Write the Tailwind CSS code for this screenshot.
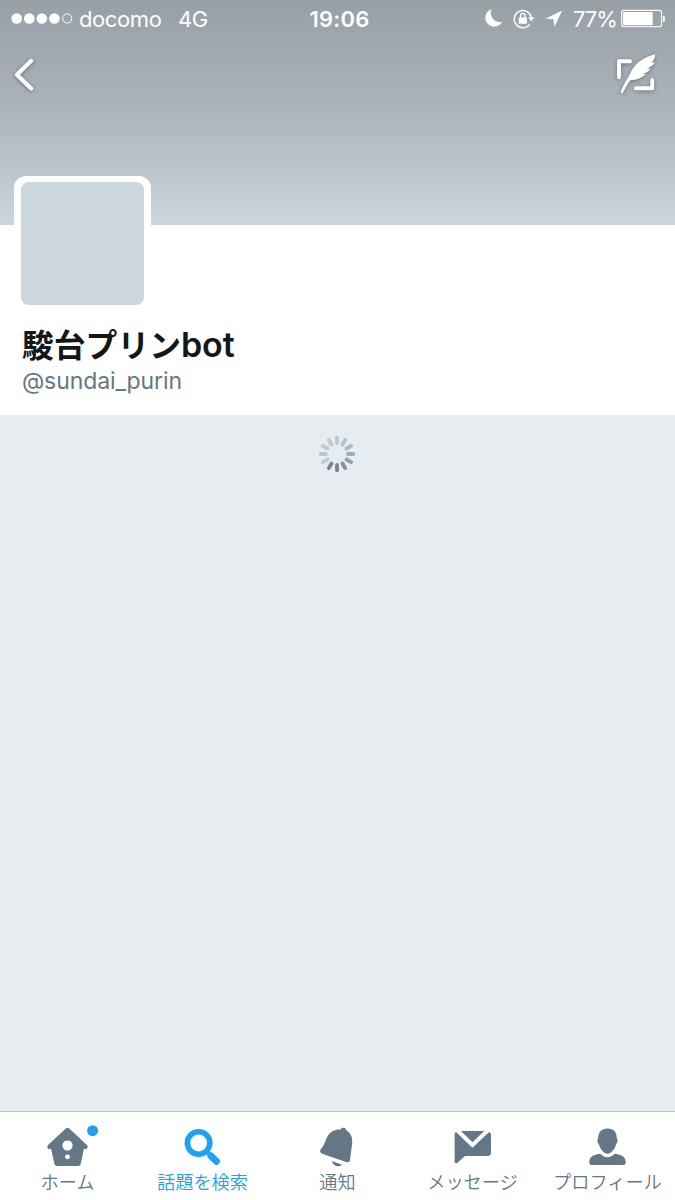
<!DOCTYPE html>
<html lang="ja">
<head>
<meta charset="utf-8">
<title>駿台プリンbot</title>
<script src="https://cdn.jsdelivr.net/npm/@tailwindcss/browser@4"></script>
</head>
<body class="w-[675px] h-[1200px] overflow-hidden flex flex-col bg-[#e6ecf0] font-[Inter,'Noto_Sans_CJK_JP',sans-serif]">
<header class="h-[225px] shrink-0 bg-linear-to-b from-[#979fa7] via-[#adb4bb] to-[#ccd6dd] text-white">
  <div class="h-[38px] flex items-center pl-[11px] pr-[9px] text-[22px] leading-[38px] whitespace-nowrap">
    <div class="flex-1 flex items-center">
      <svg class="w-[62px] h-[38px] shrink-0" viewBox="11 0 62 38" fill="#fff"><circle cx="16.7" cy="18.5" r="5.3"/><circle cx="29.3" cy="18.5" r="5.3"/><circle cx="41.8" cy="18.5" r="5.3"/><circle cx="54.4" cy="18.5" r="5.3"/><circle cx="67.2" cy="18.5" r="4.6" fill="none" stroke="#fff" stroke-width="1"/></svg>
      <span class="ml-[6px] w-[99px] tracking-[-0.4px]">docomo</span>
      <span class="tracking-[-0.4px]">4G</span>
    </div>
    <span class="w-[60px] flex justify-center pl-[2px] font-semibold tracking-[0.2px]">19:06</span>
    <div class="flex-1 flex items-center justify-end">
      <svg class="w-[84px] h-[38px] shrink-0" viewBox="481 0 84 38" fill="#fff">
        <path d="M491.500 9.300A8.900 8.900 0 1 0 502.200 21.800A9.200 9.200 0 0 1 491.500 9.300Z"/>
        <path d="M529.700 24.300A8.600 8.600 0 1 1 531.200 17.400" fill="none" stroke="#fff" stroke-width="1.400"/>
        <path d="M528.200 17.200H534.400L531.300 21.200Z"/>
        <rect x="518.700" y="17.400" width="8.200" height="6.300" rx=".8"/>
        <path d="M520.600 18V15.600a2.200 2.200 0 0 1 4.400 0V18" fill="none" stroke="#fff" stroke-width="1.400"/>
        <path d="M562.200 10.400L545.600 18.800L553.400 19.200L554.400 26.800Z"/>
      </svg>
      <span class="ml-[8px] w-[44px] tracking-[-1.100px]">77%</span>
      <svg class="ml-[4px] w-[45px] h-[38px] shrink-0" viewBox="621 0 45 38"><rect x="621.600" y="10.400" width="40" height="16.300" rx="2.200" fill="none" stroke="#fff" stroke-width="1.100"/><rect x="623" y="12" width="29.700" height="13.200" rx=".8" fill="#fff"/><path d="M663 15.400q1.800.2 1.800 1.600v3.400q0 1.400-1.800 1.600Z" fill="#fff"/></svg>
    </div>
  </div>
  <div class="h-[72px] flex justify-between">
    <svg class="w-[50px] h-[72px] drop-shadow-[0_1px_2px_rgba(0,0,0,.35)]" viewBox="0 38 50 72"><path d="M31.200 60.800L16.900 74.700L31.200 88.500" fill="none" stroke="#fff" stroke-width="4" stroke-linecap="round" stroke-linejoin="round"/></svg>
    <svg class="w-[75px] h-[72px] drop-shadow-[0_1px_2px_rgba(0,0,0,.35)]" viewBox="600 38 75 72">
      <path d="M630 61.200H619V77.200M635.800 88.200H652.200V80" fill="none" stroke="#fff" stroke-width="3.900" stroke-linecap="round" stroke-linejoin="round"/>
      <path d="M655.200 54.200C646 56.300 636.500 62 632 70C629 76 624 83.500 620.500 92L622.300 93.500C625.300 89 626.800 84.500 630.200 80.300C637 79.700 642 77.700 646 74.200L642.800 74C646.500 73.200 649.300 71 650.600 68.600L647 68.900C650.500 67.300 653.500 65.300 654.600 62.300L651.500 62.600C653.900 60.300 655.300 57.500 655.200 54.200Z" fill="#fff"/>
    </svg>
  </div>
</header>
<section class="relative h-[190px] shrink-0 bg-white">
  <div class="absolute left-[14px] -top-[49px] w-[137px] h-[136px] rounded-[12px] bg-white px-[7px] pt-[6px]"><div class="w-[123px] h-[123px] rounded-[8px] bg-[#ccd6dd]"></div></div>
  <h1 class="pt-[96px] pl-[22px] h-[142px] leading-[44px] whitespace-nowrap text-[#14171a] font-bold flex items-baseline"><span class="text-[31.800px] font-['Noto_Sans_CJK_JP']">駿台プリン</span><span class="text-[34px] font-semibold tracking-[-0.100px]">bot</span></h1>
  <p class="pl-[22px] text-[23px] leading-[28px] text-[#657786] tracking-[-0.100px]">@sundai_purin</p>
</section>
<main class="flex-1 flex justify-center pt-[18px] pr-px">
  <svg class="w-[42px] h-[42px]" viewBox="-21 -21 42 42" stroke-width="3.800" stroke-linecap="round">
    <path d="M0-11V-16.300" stroke="#bfc8cf"/><path d="M0-11V-16.300" transform="rotate(30)" stroke="#b8c1c9"/><path d="M0-11V-16.300" transform="rotate(60)" stroke="#afb9c2"/><path d="M0-11V-16.300" transform="rotate(90)" stroke="#a1acb6"/><path d="M0-11V-16.300" transform="rotate(120)" stroke="#939faa"/><path d="M0-11V-16.300" transform="rotate(150)" stroke="#84919d"/><path d="M0-11V-16.300" transform="rotate(180)" stroke="#778592"/><path d="M0-11V-16.300" transform="rotate(210)" stroke="#778592"/><path d="M0-11V-16.300" transform="rotate(240)" stroke="#c3cbd2"/><path d="M0-11V-16.300" transform="rotate(270)" stroke="#bcc5cc"/><path d="M0-11V-16.300" transform="rotate(300)" stroke="#c1cad1"/><path d="M0-11V-16.300" transform="rotate(330)" stroke="#c1cad1"/>
  </svg>
</main>
<nav class="h-[89px] shrink-0 grid grid-cols-5 border-t border-[#b6bdc3] bg-white text-[#657786] text-[18.200px] leading-[24px] text-center whitespace-nowrap font-['Noto_Sans_CJK_JP'] font-[350]">
  <div><svg class="block w-[135px] h-[57px]" viewBox="0 1112 135 57" fill="#657786"><path fill-rule="evenodd" d="M65.500 1128.700Q67.500 1127 69.500 1128.700L87.200 1145.200Q88.500 1147 87 1148.500Q85.500 1149.500 84 1148.500L80.700 1164Q80.200 1166 78.200 1166H57Q55 1166 54.500 1164L51 1148.500Q49.500 1149.500 48 1148.500Q46.500 1147 47.800 1145.200ZM67.500 1140.400a5.100 5.100 0 1 0 .01 0ZM67.500 1154.400a2.400 2.400 0 1 0 .01 0Z"/><circle cx="92.600" cy="1130.700" r="5.500" fill="#1da1f2"/></svg><span>ホーム</span></div>
  <div class="text-[#1da1f2]"><svg class="block w-[135px] h-[57px]" viewBox="135 1112 135 57" fill="none" stroke="#1da1f2"><circle cx="198.600" cy="1143" r="11.200" stroke-width="5.600"/><path d="M206 1150.800L210 1154.800" stroke-width="4"/><path d="M211 1156L216.400 1161.200" stroke-width="7" stroke-linecap="round"/></svg><span>話題を検索</span></div>
  <div><svg class="block w-[135px] h-[57px]" viewBox="270 1112 135 57" fill="#657786"><path d="M340.800 1129.500C341.200 1126.900 346 1126.900 346.500 1130.400C350.500 1132.700 352.600 1137 352.200 1142.500C351.600 1149 350.600 1155 350 1160Q349.700 1163 346.800 1162.200L322.300 1153.700Q318.700 1152 321 1149C324.500 1145.500 325 1140.500 327.700 1136C330.500 1131.300 335.500 1129 340.800 1129.500ZM331.700 1161.100C334.500 1162.200 338 1163.300 341.800 1164.500C340 1167.500 333.500 1167 331.700 1161.100Z"/></svg><span>通知</span></div>
  <div><svg class="block w-[135px] h-[57px]" viewBox="405 1112 135 57" fill="#657786"><path d="M461 1131H484.200L472.500 1142.200ZM456 1132L472.400 1147.800L489.200 1132Q491 1133 491 1135V1152.500Q491 1156 487.500 1156H465L457.500 1162.700Q454.600 1164.500 454.600 1161V1134.500Q454.600 1132.700 456 1132Z"/></svg><span>メッセージ</span></div>
  <div><svg class="block w-[135px] h-[57px]" viewBox="540 1112 135 57" fill="#657786"><path d="M607.500 1128.400C613.500 1128.400 617 1132 616.700 1138.300C618.200 1139 617.700 1142.500 616 1144.500C615 1149 611 1153.800 607.500 1153.800S600 1149 599 1144.500C597.300 1142.500 596.800 1139 598.300 1138.300C598 1132 601.500 1128.400 607.500 1128.400ZM600.500 1153.700C603.500 1158.300 611.500 1158.300 614.500 1153.700C620.500 1154.500 625.700 1156 625.700 1162V1162.500Q625.700 1165 623.200 1165H591.800Q589.300 1165 589.300 1162.500V1162C589.300 1156 594.500 1154.500 600.500 1153.700Z"/></svg><span>プロフィール</span></div>
</nav>
</body>
</html>
